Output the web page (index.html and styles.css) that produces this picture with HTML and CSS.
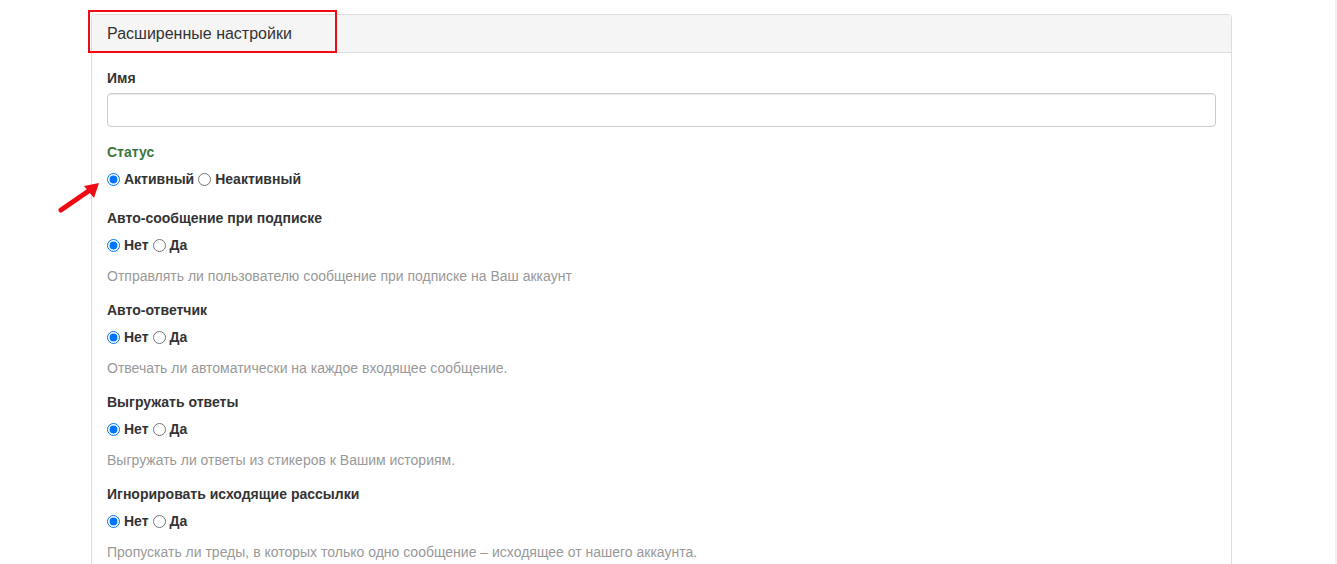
FILE: index.html
```html
<!DOCTYPE html>
<html lang="ru">
<head>
    <meta charset="UTF-8">
    <meta name="viewport" content="width=device-width, initial-scale=1.0">
    <title>Расширенные настройки</title>
    <link rel="stylesheet" href="styles.css">
</head>
<body>
    <div class="page">
        <div class="panel">
            <div class="panel-heading">
                <span class="panel-title">Расширенные настройки</span>
                <div class="highlight"></div>
            </div>
            <div class="panel-body">
                <div class="form-group form-group-input">
                    <label class="control-label">Имя</label>
                    <input type="text" class="form-control">
                </div>

                <div class="form-group has-success">
                    <label class="control-label">Статус</label>
                    <div class="radios radios-last">
                        <svg class="arrow" width="60" height="50" viewBox="0 0 60 50">
                            <line x1="8" y1="42" x2="37" y2="22" stroke="#f00a14" stroke-width="5" stroke-linecap="round"/>
                            <polygon points="46,15 31,18 41,30" fill="#f00a14"/>
                        </svg>
                        <label><input type="radio" name="status" checked>Активный</label>
                        <label><input type="radio" name="status">Неактивный</label>
                    </div>
                </div>

                <div class="form-group">
                    <label class="control-label">Авто-сообщение при подписке</label>
                    <div class="radios">
                        <label><input type="radio" name="welcome" checked>Нет</label>
                        <label><input type="radio" name="welcome">Да</label>
                    </div>
                    <p class="help-block">Отправлять ли пользователю сообщение при подписке на Ваш аккаунт</p>
                </div>

                <div class="form-group">
                    <label class="control-label">Авто-ответчик</label>
                    <div class="radios">
                        <label><input type="radio" name="autoreply" checked>Нет</label>
                        <label><input type="radio" name="autoreply">Да</label>
                    </div>
                    <p class="help-block">Отвечать ли автоматически на каждое входящее сообщение.</p>
                </div>

                <div class="form-group">
                    <label class="control-label">Выгружать ответы</label>
                    <div class="radios">
                        <label><input type="radio" name="export" checked>Нет</label>
                        <label><input type="radio" name="export">Да</label>
                    </div>
                    <p class="help-block">Выгружать ли ответы из стикеров к Вашим историям.</p>
                </div>

                <div class="form-group">
                    <label class="control-label">Игнорировать исходящие рассылки</label>
                    <div class="radios">
                        <label><input type="radio" name="ignore" checked>Нет</label>
                        <label><input type="radio" name="ignore">Да</label>
                    </div>
                    <p class="help-block">Пропускать ли треды, в которых только одно сообщение – исходящее от нашего аккаунта.</p>
                </div>
            </div>
        </div>
    </div>
</body>
</html>
```

FILE: styles.css
```css
html, body {
    margin: 0;
    padding: 0;
}
body {
    font-family: "Liberation Sans", Arial, sans-serif;
    font-size: 14px;
    line-height: 20px;
    color: #333;
    background: #fff;
    height: 564px;
    overflow: hidden;
    border-right: 2px solid #f1f1f1; /* scrollbar track edge */
    box-sizing: border-box;
}
.page {
    padding: 14px 0 0 91px;
}
.panel {
    width: 1139px;
    border: 1px solid #ddd;
    border-radius: 4px;
    background: #fff;
}
.panel-heading {
    position: relative;
    height: 37px;
    padding: 0 15px;
    display: flex;
    align-items: center;
    background: #f5f5f5;
    border-bottom: 1px solid #ddd;
    border-radius: 3px 3px 0 0;
}
.panel-title {
    font-size: 16px;
    color: #333;
    padding-top: 1px;
}
/* red annotation frame round the title */
.highlight {
    position: absolute;
    left: -4px;
    top: -5px;
    width: 245px;
    height: 39px;
    border: 2px solid #f00a14;
}
.panel-body {
    padding: 15px 15px 0;
}
.form-group {
    margin-bottom: 14px;
}
.form-group-input {
    padding-bottom: 1px;
}
.control-label {
    display: block;
    font-weight: bold;
    margin-bottom: 5px;
}
.has-success .control-label {
    color: #3c763d;
}
.form-control {
    display: block;
    width: 100%;
    height: 34px;
    box-sizing: border-box;
    border: 1px solid #ccc;
    border-radius: 4px;
    box-shadow: inset 0 1px 1px rgba(0, 0, 0, 0.075);
    padding: 6px 12px;
    font: inherit;
}
.radios {
    position: relative;
    display: flex;
    height: 20px;
    align-items: center;
    margin-top: 7px;
    font-weight: bold;
}
.radios-last {
    padding-bottom: 5px;
    align-items: flex-start;
}
.radios label {
    display: flex;
    align-items: center;
    height: 20px;
}
.radios input {
    width: 13px;
    height: 13px;
    margin: 0 4px 0 0;
}
.radios label + label input {
    margin-left: 4px;
}
.arrow {
    position: absolute;
    left: -54px;
    top: -1px;
}
.help-block {
    margin: 11px 0 0;
    color: #999;
}
```
